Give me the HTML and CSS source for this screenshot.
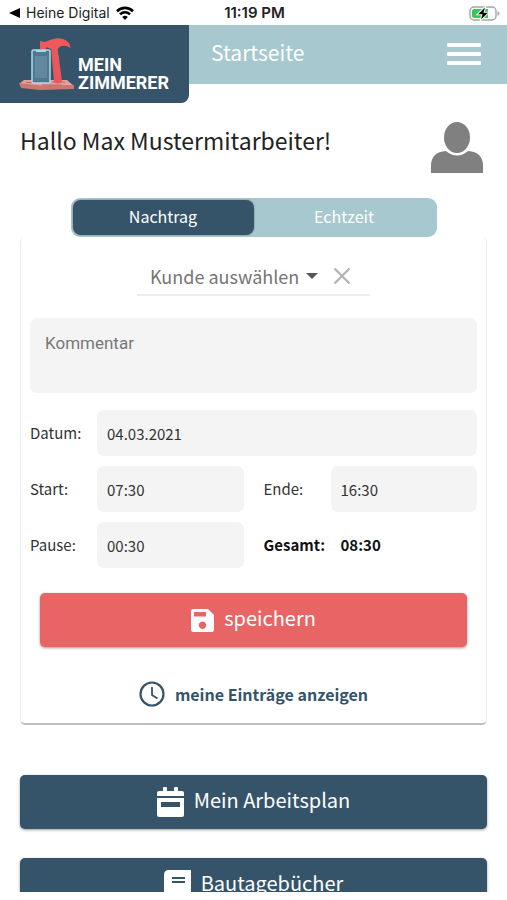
FILE: index.html
```html
<!DOCTYPE html>
<html lang="de">
<head>
    <meta charset="UTF-8">
    <meta name="viewport" content="width=device-width, initial-scale=1.0">
    <title>Mein Zimmerer</title>
    <link rel="stylesheet" href="styles.css">
</head>
<body>
    <div class="status-bar">
        <div class="status-left">
            <svg width="11" height="10" viewBox="0 0 11 10"><path d="M11 0v10L0 5z"/></svg>
            <span>Heine Digital</span>
            <svg width="18" height="14" viewBox="0 0 18 14" fill="none" stroke="#000" stroke-width="2.6">
                <path d="M1 5.2a11.4 11.4 0 0 1 16 0M4 8.4a7 7 0 0 1 10 0"/>
                <path d="M9 14L6.2 11a4 4 0 0 1 5.6 0z" fill="#000" stroke="none"/>
            </svg>
        </div>
        <div class="status-time">11:19 PM</div>
        <div class="status-right">
            <svg width="31" height="15" viewBox="0 0 31 15">
                <rect x="1" y="1" width="26" height="13" rx="4" fill="#fff" stroke="#a5a5a5" stroke-width="1.4"/>
                <path d="M5 3h14v9H5a2 2 0 0 1-2-2V5a2 2 0 0 1 2-2z" fill="#34c759"/>
                <path d="M28.500 5.200v4.600q2-.6 2-2.300t-2-2.300z" fill="#a5a5a5"/>
                <path d="M16 1.500L9 8.300h4.500L12 13.500l7-6.800h-4.500z" stroke="#fff" stroke-width="2" paint-order="stroke"/>
            </svg>
        </div>
    </div>

    <header class="header">
        <a class="logo" href="#">
            <svg width="56" height="54" viewBox="0 0 56 54">
                <path d="M6 43h43l7 6-34 1-21-3z" fill="#e3a099"/>
                <path d="M1 46l21 2.500 34-.5v4l-34 1-19-2z" fill="#c9786f"/>
                <path d="M8 45.500h12M34 45h13M24 48h20" stroke="#b86b66" stroke-width="1"/>
                <path d="M33 10h6.500l4.500 35q-4 3-8 0z" fill="#e9575a"/>
                <path d="M22 4l5 1 5-2q7-3 13-1 7 2.500 7.500 9-6-4-11-1l-2 2h-7l-4-2-1 3-5.500-1z" fill="#f0595b"/>
                <rect x="14" y="13" width="18" height="33" rx="1.500" fill="#507990" stroke="#a8dbe6" stroke-width="1.500"/>
                <path d="M18 13h10v2h-10z" fill="#a8dbe6"/>
                <path d="M17 19h12v22H17z" fill="#7ba1b3" opacity=".4"/>
            </svg>
            <span class="logo-text">MEIN<br>ZIMMERER</span>
        </a>
        <h1 class="page-title">Startseite</h1>
        <button class="menu-btn" type="button" aria-label="Menü">
            <span></span>
            <span></span>
            <span></span>
        </button>
    </header>

    <main class="content">
        <div class="greeting">
            <h2>Hallo Max Mustermitarbeiter!</h2>
            <svg width="52" height="52" viewBox="0 0 52 52" fill="#808080">
                <ellipse cx="26" cy="15.500" rx="13" ry="15.500"/>
                <path d="M0 51V44Q0 30 15 29q11 9 22 0 15 1 15 15v7z"/>
            </svg>
        </div>

        <div class="tabs">
            <button class="tab active" type="button">Nachtrag</button>
            <button class="tab" type="button">Echtzeit</button>
        </div>

        <form class="card">
            <div class="customer">
                <select class="customer-select" aria-label="Kunde">
                    <option>Kunde auswählen</option>
                </select>
                <svg class="caret" width="12" height="6" viewBox="0 0 12 6"><path d="M0 0h12L6 6z" fill="#555"/></svg>
                <button class="clear-btn" type="button" aria-label="Auswahl löschen">
                    <svg width="18" height="18" viewBox="0 0 18 18" stroke="#b5b5b5" stroke-width="2.400"><path d="M1.500 1.500l15 15M16.500 1.500l-15 15"/></svg>
                </button>
            </div>

            <textarea class="comment" placeholder="Kommentar" aria-label="Kommentar"></textarea>

            <div class="fields">
                <div class="field wide">
                    <label for="datum">Datum:</label>
                    <input type="text" id="datum" value="04.03.2021">
                </div>
                <div class="field">
                    <label for="start">Start:</label>
                    <input type="text" id="start" value="07:30">
                </div>
                <div class="field">
                    <label for="ende">Ende:</label>
                    <input type="text" id="ende" value="16:30">
                </div>
                <div class="field">
                    <label for="pause">Pause:</label>
                    <input type="text" id="pause" value="00:30">
                </div>
                <div class="field total">
                    <label for="gesamt">Gesamt:</label>
                    <output id="gesamt">08:30</output>
                </div>
            </div>

            <button class="btn btn-save" type="button">
                <svg width="23" height="23" viewBox="0 0 23 23"><path fill="#fff" fill-rule="evenodd" d="M2.500 0H17l6 6v14.500a2.500 2.500 0 0 1-2.500 2.500h-18A2.500 2.500 0 0 1 0 20.500v-18A2.500 2.500 0 0 1 2.500 0zM3 3v4.500h12V3zM11.500 12.500a3.700 3.700 0 1 0 .01 0z"/></svg>
                <span>speichern</span>
            </button>

            <a class="entries-link" href="#">
                <svg width="26" height="26" viewBox="0 0 26 26" fill="none" stroke="#35546a" stroke-width="2.200"><circle cx="13" cy="13" r="11.500"/><path d="M13 6v8l5.500 3.500" stroke-width="1.800"/></svg>
                <span>meine Einträge anzeigen</span>
            </a>
        </form>

        <button class="btn" type="button">
            <svg width="27" height="30" viewBox="0 0 27 30"><path fill="#fff" fill-rule="evenodd" d="M2 4h4V1q0-1 1-1h2q1 0 1 1v3h7V1q0-1 1-1h2q1 0 1 1v3h4q2 0 2 2v3H0V6q0-2 2-2zM0 11h27v17q0 2-2 2H2q-2 0-2-2zM4 15v5h19v-5z"/></svg>
            <span>Mein Arbeitsplan</span>
        </button>
        <button class="btn" type="button">
            <svg width="27" height="30" viewBox="0 0 27 30"><path fill="#fff" fill-rule="evenodd" d="M5 0h22v23h-2v4h2v3H5q-5 0-5-5V5q0-5 5-5zM8 7v2h13V7zM8 11v2h13v-2zM5 23q-2 0-2 2t2 2h17v-4z"/></svg>
            <span>Bautagebücher</span>
        </button>
    </main>
</body>
</html>
```
FILE: styles.css
```css
* {
    margin: 0;
    padding: 0;
    box-sizing: border-box;
}

body {
    font-family: "Noto Sans CJK SC", "Noto Sans", sans-serif;
    font-size: 16px;
    line-height: 24px;
    color: #333;
    background-color: #fff;
    height: 100vh;
    padding-bottom: 8px;
    display: flex;
    flex-direction: column;
    overflow: hidden;
}

button,
input,
select,
textarea {
    font: inherit;
    color: inherit;
    border: none;
    background: none;
}

button {
    cursor: pointer;
}

a {
    text-decoration: none;
}

svg {
    display: block;
    flex-shrink: 0;
}

/* Statusleiste */
.status-bar {
    display: grid;
    grid-template-columns: 1fr auto 1fr;
    align-items: center;
    height: 25px;
    flex-shrink: 0;
    padding: 1px 7px 0 9px;
    font-family: Inter, sans-serif;
    font-size: 14px;
    color: #222;
}

.status-left {
    display: flex;
    align-items: center;
    gap: 6px;
}

.status-time {
    font-size: 15px;
    font-weight: 600;
}

.status-right {
    display: flex;
    justify-content: flex-end;
}

/* Kopfzeile */
.header {
    position: relative;
    z-index: 1;
    display: flex;
    align-items: flex-start;
    height: 59px;
    flex-shrink: 0;
    padding-right: 26px;
    background-color: #a7c8cf;
}

.logo {
    display: flex;
    align-items: flex-start;
    gap: 4px;
    width: 189px;
    height: 78px;
    padding: 12px 0 0 18px;
    background-color: #35546a;
    border-bottom-right-radius: 8px;
    color: #fff;
}

.logo-text {
    padding-top: 19px;
    font-family: Roboto, sans-serif;
    font-size: 18px;
    font-weight: 700;
    line-height: 18px;
}

.page-title {
    flex: 1;
    padding-left: 22px;
    font-size: 21px;
    font-weight: 400;
    line-height: 54px;
    color: #fff;
}

.menu-btn {
    display: flex;
    flex-direction: column;
    gap: 5px;
    width: 34px;
    padding-top: 18px;
}

.menu-btn span {
    height: 4px;
    border-radius: 1px;
    background-color: #fff;
}

/* Inhalt */
.content {
    flex: 1;
    min-height: 0;
    padding: 38px 20px 0;
    overflow: hidden;
}

.greeting {
    display: flex;
    justify-content: space-between;
    padding-right: 4px;
    margin-bottom: 24px;
}

.greeting h2 {
    font-size: 23px;
    font-weight: 400;
    line-height: 36px;
    color: #222;
}

.tabs {
    display: flex;
    width: 366px;
    max-width: 100%;
    height: 39px;
    margin: 0 auto;
    padding: 2px;
    border-radius: 9px;
    background-color: #a7c8cf;
}

.tab {
    flex: 1;
    padding-bottom: 4px;
    border-radius: 8px;
    color: #fff;
}

.tab.active {
    background-color: #35546a;
    box-shadow: 0 0 2px rgba(0, 0, 0, 0.4);
}

.card {
    padding: 20px 9px 16px;
    margin-bottom: 50px;
    border: 1px solid #ececec;
    border-top: none;
    border-bottom: 2px solid #bfbfbf;
    border-radius: 5px;
}

.customer {
    display: flex;
    align-items: center;
    width: 233px;
    height: 39px;
    margin: 0 auto 22px;
    padding-left: 13px;
    border-bottom: 2px solid #eee;
    color: #757575;
}

.customer-select {
    appearance: none;
    width: 174px;
    margin-right: -18px;
    padding-right: 20px;
    font-size: 18px;
    line-height: 28px;
}

.caret {
    pointer-events: none;
}

.clear-btn {
    margin-left: 15px;
}

.comment {
    display: block;
    width: 100%;
    height: 75px;
    margin-bottom: 17px;
    padding: 13px 15px;
    border-radius: 7px;
    background-color: #f4f4f4;
    font-family: Roboto, sans-serif;
    font-size: 17px;
    resize: none;
}

.comment::placeholder {
    color: #777;
}

.fields {
    display: grid;
    grid-template-columns: repeat(2, minmax(0, 1fr));
    gap: 10px 20px;
    margin-bottom: 25px;
    font-size: 15px;
}

.field {
    display: flex;
    align-items: center;
    gap: 10px;
    height: 46px;
}

.wide {
    grid-column: span 2;
}

.field label {
    width: 57px;
    flex-shrink: 0;
}

.field input {
    flex: 1;
    min-width: 0;
    height: 100%;
    padding: 0 10px;
    border-radius: 7px;
    background-color: #f4f4f4;
}

.total {
    font-weight: 700;
    color: #111;
}

.total output {
    padding-left: 10px;
}

.btn {
    display: flex;
    justify-content: center;
    align-items: center;
    gap: 10px;
    width: 100%;
    height: 54px;
    margin-bottom: 29px;
    border-radius: 5px;
    background-color: #35546a;
    box-shadow: 0 1px 3px rgba(0, 0, 0, 0.4);
    font-size: 20px;
    line-height: 32px;
    color: #fff;
}

.btn span {
    padding-bottom: 4px;
}

.btn-save {
    width: auto;
    min-width: calc(100% - 20px);
    margin: 0 10px 34px;
    background-color: #e96465;
}

.entries-link {
    display: flex;
    justify-content: center;
    align-items: center;
    gap: 10px;
    font-weight: 700;
    color: #35546a;
}
```
